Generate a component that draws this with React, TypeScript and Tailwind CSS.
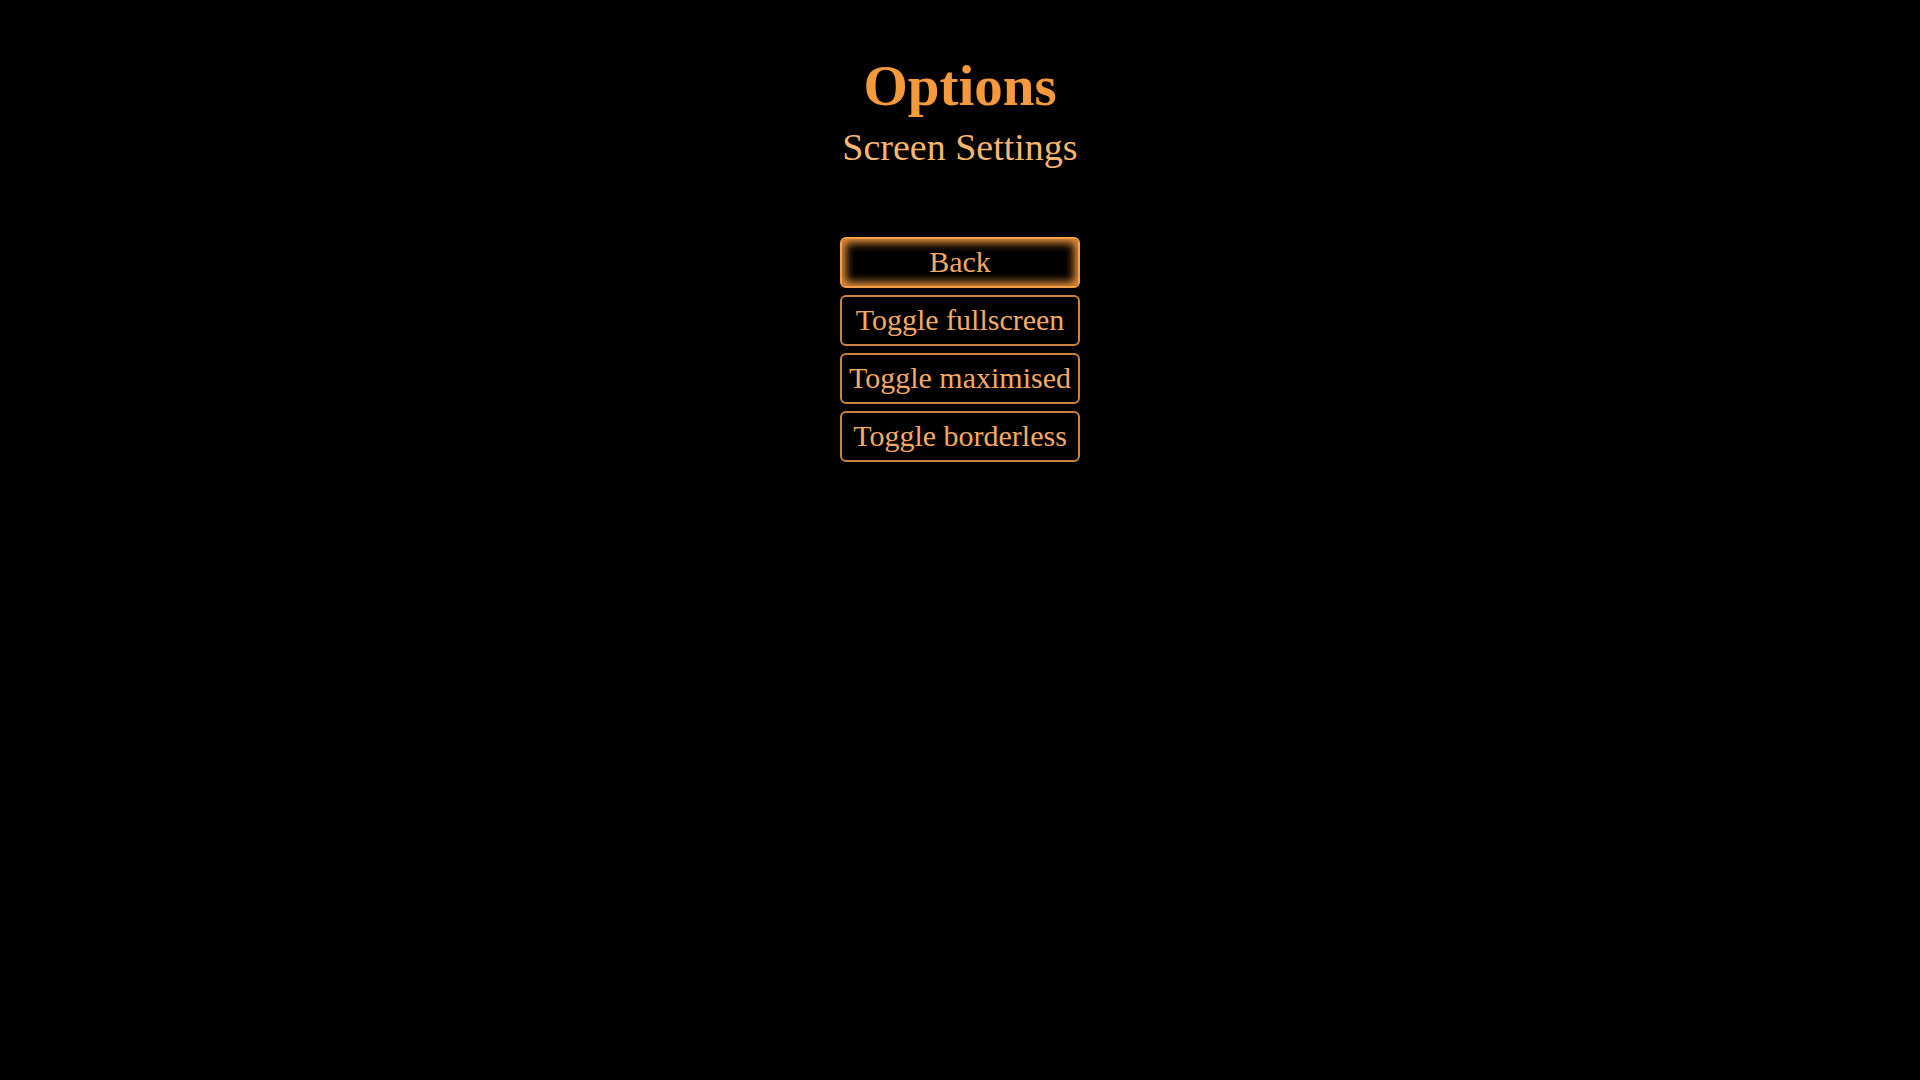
import React from "react";

const serif = { fontFamily: '"Liberation Serif", "DejaVu Serif", serif' };

export default function App() {
  const buttons = ["Back", "Toggle fullscreen", "Toggle maximised", "Toggle borderless"];
  return (
    <div className="w-[1920px] h-[1080px] bg-black flex flex-col items-center" style={serif}>
      <h1 className="mt-[57px] text-[57px] leading-none font-bold text-[#f5993d]">Options</h1>
      <h2 className="mt-[14px] text-[38px] leading-none text-[#f7b670]">Screen Settings</h2>
      <div className="mt-[71px] flex flex-col gap-[7px]">
        {buttons.map((b, i) => (
          <button
            key={b}
            className={
              i === 0
                ? "w-[240px] h-[51px] pb-[2px] rounded-[6px] border-2 border-[#f5a04a] shadow-[inset_0_0_9px_4px_#e8903a] flex items-center justify-center text-[30px] leading-none text-[#f2aa66]"
                : "w-[240px] h-[51px] pb-[2px] rounded-[6px] border-2 border-[#c8843e] flex items-center justify-center text-[30px] leading-none text-[#f2aa66] whitespace-nowrap"
            }
            style={serif}
          >
            {b}
          </button>
        ))}
      </div>
    </div>
  );
}
